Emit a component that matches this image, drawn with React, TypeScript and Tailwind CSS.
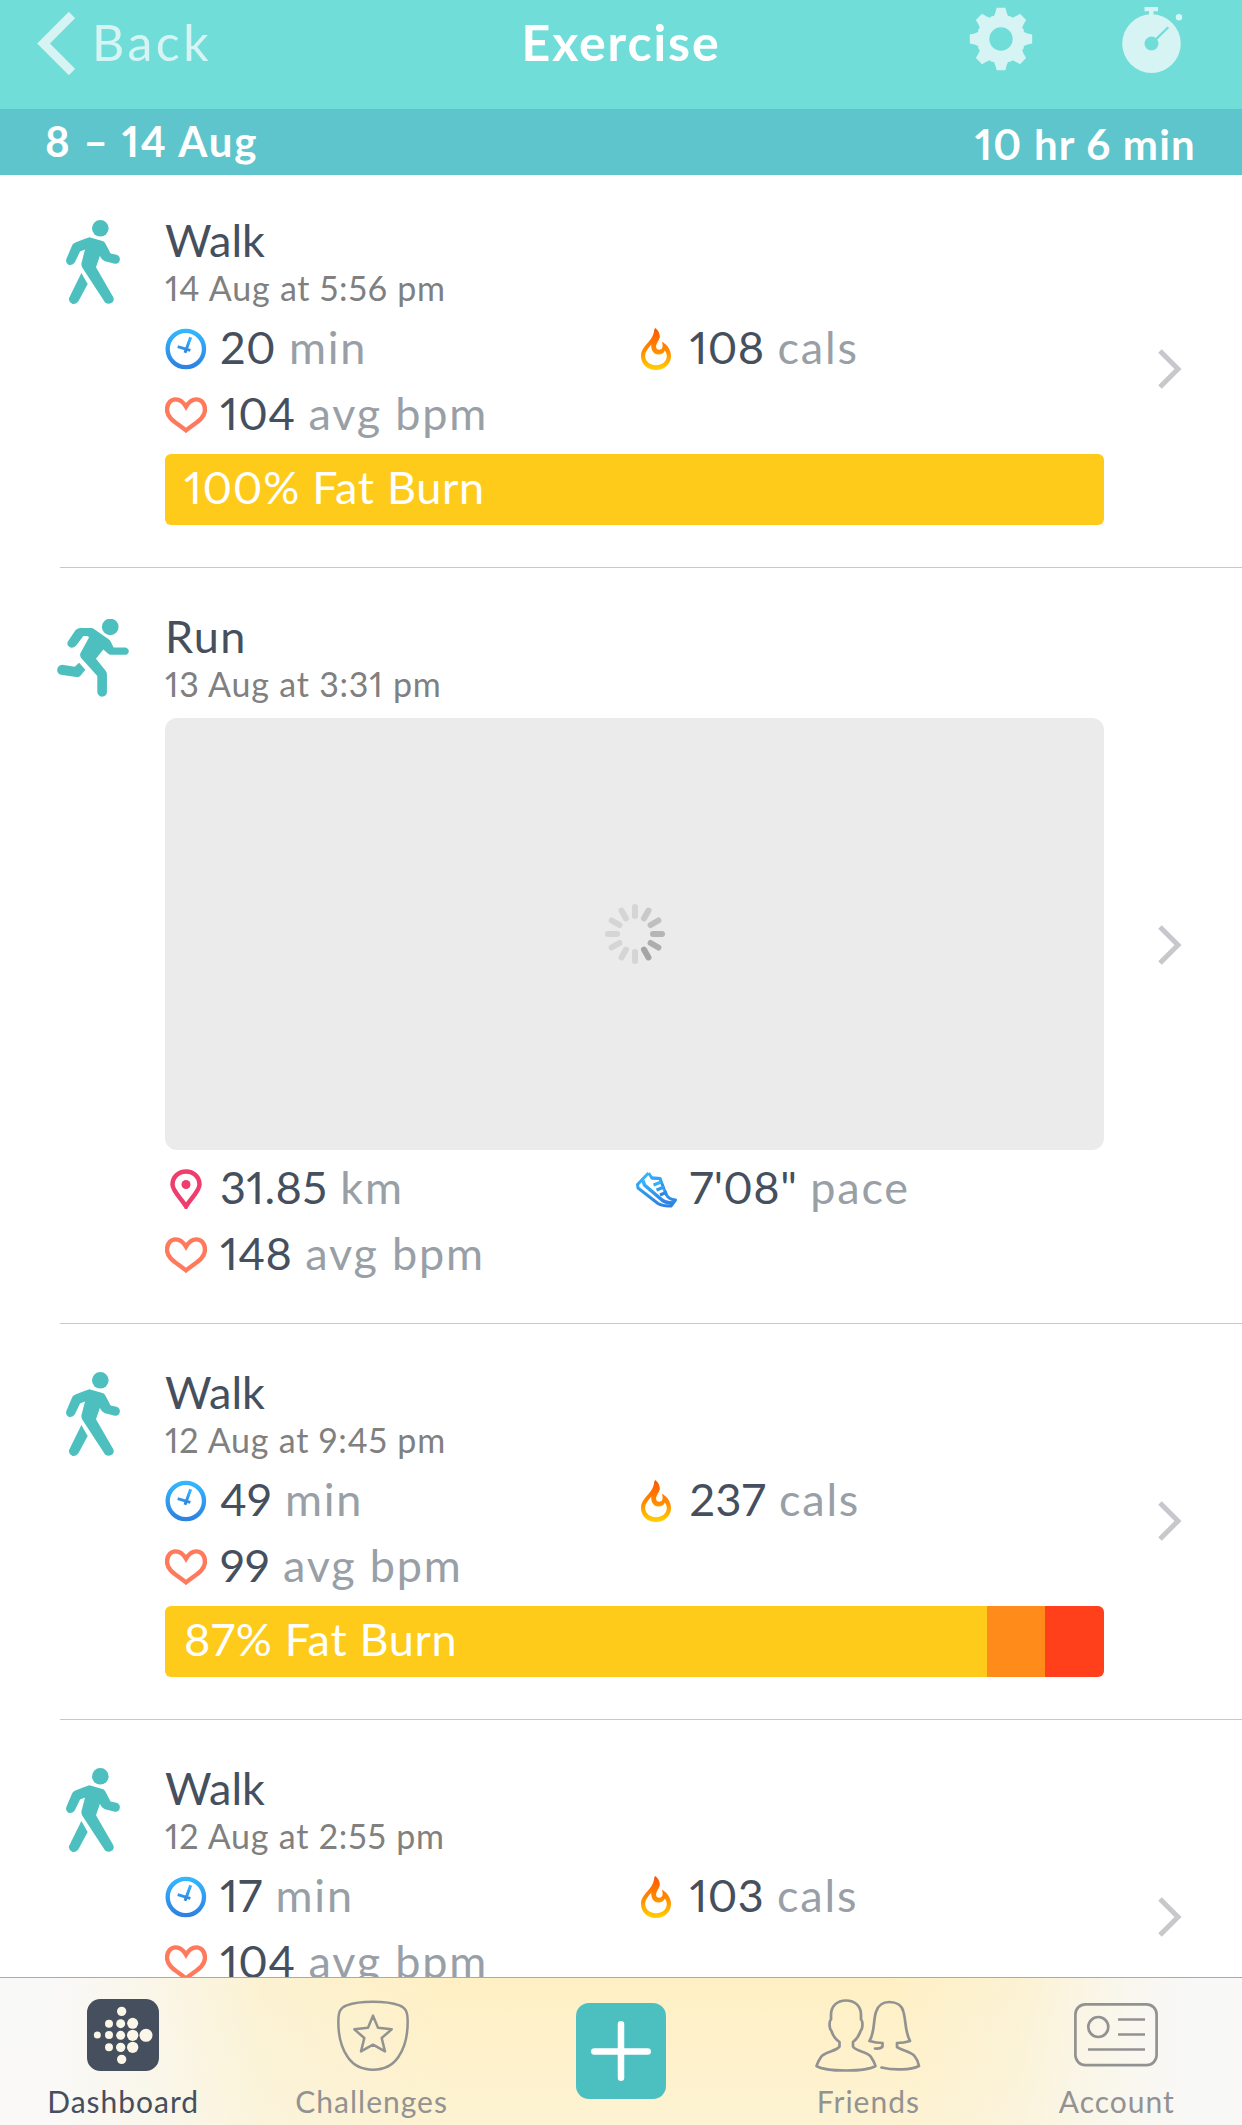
import type { ReactNode } from "react";
import clsx from "clsx";

type StatKind = "time" | "cals" | "heart" | "distance" | "pace";

type Stat = {
  kind: StatKind;
  value: string;
  unit: string;
};

type Zone = { color: string; width: number };

type Exercise = {
  id: number;
  type: "Walk" | "Run";
  date: string;
  stats: Stat[];
  hasMap?: boolean;
  zoneLabel?: string;
  zones?: Zone[];
};

const exercises: Exercise[] = [
  {
    id: 1,
    type: "Walk",
    date: "14 Aug at 5:56 pm",
    stats: [
      { kind: "time", value: "20", unit: "min" },
      { kind: "cals", value: "108", unit: "cals" },
      { kind: "heart", value: "104", unit: "avg bpm" },
    ],
    zoneLabel: "100% Fat Burn",
    zones: [{ color: "#ffcb1a", width: 100 }],
  },
  {
    id: 2,
    type: "Run",
    date: "13 Aug at 3:31 pm",
    hasMap: true,
    stats: [
      { kind: "distance", value: "31.85", unit: "km" },
      { kind: "pace", value: "7'08\"", unit: "pace" },
      { kind: "heart", value: "148", unit: "avg bpm" },
    ],
  },
  {
    id: 3,
    type: "Walk",
    date: "12 Aug at 9:45 pm",
    stats: [
      { kind: "time", value: "49", unit: "min" },
      { kind: "cals", value: "237", unit: "cals" },
      { kind: "heart", value: "99", unit: "avg bpm" },
    ],
    zoneLabel: "87% Fat Burn",
    zones: [
      { color: "#ffcb1a", width: 87.54 },
      { color: "#ff8c1a", width: 6.18 },
      { color: "#ff401a", width: 6.28 },
    ],
  },
  {
    id: 4,
    type: "Walk",
    date: "12 Aug at 2:55 pm",
    stats: [
      { kind: "time", value: "17", unit: "min" },
      { kind: "cals", value: "103", unit: "cals" },
      { kind: "heart", value: "104", unit: "avg bpm" },
    ],
    zoneLabel: "100% Fat Burn",
    zones: [{ color: "#ffcb1a", width: 100 }],
  },
];

export default function App() {
  return (
    <div className="flex h-[2125px] w-[1242px] flex-col overflow-hidden bg-white font-['Lato','Open_Sans',sans-serif] proportional-nums text-[#454f5e]">
      <Header />
      <div className="z-10 flex h-[66px] shrink-0 justify-between bg-[#5ec5cc] pl-[45px] pr-[46px] text-[42px] font-bold leading-[66px] text-white">
        <span className="-mt-px tracking-[1.8px]">8 – 14 Aug</span>
        <span className="mt-[2px] tracking-[1.2px]">10 hr 6 min</span>
      </div>
      <main className="-mt-[3px] min-h-0 flex-1 overflow-hidden">
        {exercises.map((e) => (
          <ExerciseRow key={e.id} e={e} />
        ))}
      </main>
      <TabBar />
    </div>
  );
}

function Header() {
  return (
    <header className="grid h-[109px] shrink-0 grid-cols-3 bg-[#71ddd8] text-[50px] leading-[60px]">
      <div className="flex pl-[37px] pt-[12px] text-[#d6f4f3]">
        <svg width="38" height="63" viewBox="0 0 38 63" fill="none" stroke="currentColor" strokeWidth="9">
          <path d="M35 3 6.5 31.5 35 60" />
        </svg>
        <span className="ml-[17px] tracking-[3.5px]">Back</span>
      </div>
      <h1 className="pt-[12px] text-center font-bold tracking-[1.9px] text-white">Exercise</h1>
      <div className="flex justify-end gap-[89px] pr-[58px] pt-[7px] text-[#d6f4f3]">
        <GearIcon />
        <StopwatchIcon />
      </div>
    </header>
  );
}

function ExerciseRow({ e }: { e: Exercise }) {
  return (
    <section className="ml-[60px] flex border-b border-[#c8c7cc]">
      <div className="-ml-[3px] flex w-[72px] shrink-0 justify-center pt-[48px]">
        {e.type === "Walk" ? <WalkIcon /> : <RunIcon />}
      </div>
      <div
        className={clsx(
          "ml-[36px] w-[939px] shrink-0 pt-[43px]",
          e.zones ? "pb-[42px]" : "pb-[37px]",
        )}
      >
        <h2 className={clsx("text-[45px] leading-[50px]", e.type === "Run" && "tracking-[1.5px]")}>{e.type}</h2>
        <p className="mt-px text-[34px] leading-[44px] tracking-[0.8px] text-[#808080]">{e.date}</p>
        {e.hasMap && (
          <div className="mb-[4px] mt-[12px] flex h-[432px] items-center justify-center rounded-xl bg-[#ebebeb]">
            <Spinner />
          </div>
        )}
        <div className={clsx("grid grid-cols-2", !e.hasMap && "mt-[4px]")}>
          {e.stats.map((s) => (
            <div key={s.kind} className="flex h-[66px] text-[45px] leading-[67px]">
              <span className="mt-1 flex w-[42px] items-center justify-center">
                <StatIcon kind={s.kind} />
              </span>
              <span className="ml-[13px] tracking-[0.4px]">{s.value}</span>
              <span className="ml-[13px] tracking-[1.8px] text-[#999fa6]">{s.unit}</span>
            </div>
          ))}
        </div>
        {e.zones && (
          <div className="relative mt-[8px] flex h-[71px] overflow-hidden rounded-md">
            {e.zones.map((z) => (
              <div key={z.color} style={{ width: `${z.width}%`, background: z.color }} />
            ))}
            <span className="absolute left-[19px] top-0 text-[45px] leading-[67px] tracking-[0.7px] text-white">
              {e.zoneLabel}
            </span>
          </div>
        )}
      </div>
      <div className="mb-[2px] ml-[54px] flex items-center">
        <svg width="24" height="40" viewBox="0 0 24 40" fill="none" stroke="#c7c7cc" strokeWidth="5">
          <path d="M2 2 20 20 2 38" />
        </svg>
      </div>
    </section>
  );
}

function StatIcon({ kind }: { kind: StatKind }) {
  switch (kind) {
    case "time":
      return (
        <svg width="42" height="42" viewBox="0 0 126 126" fill="none" stroke="url(#blue)">
          <BlueGradient />
          <circle cx="62.5" cy="63" r="54.5" strokeWidth="13" />
          <path d="M60 74 77 28M38 56 76 67" strokeWidth="9" />
        </svg>
      );
    case "cals":
      return (
        <svg width="30" height="42" viewBox="0 0 30 42">
          <defs>
            <linearGradient id="flame" x1="0" y1="0" x2="0" y2="1">
              <stop offset="0" stopColor="#ff5500" />
              <stop offset="0.55" stopColor="#ff8c00" />
              <stop offset="1" stopColor="#ffd200" />
            </linearGradient>
          </defs>
          <path
            fill="url(#flame)"
            fillRule="evenodd"
            d="M14.3 0C17 2 18.8 5 18.8 8.500C18.800 12 15.100 15 15.100 18.500C15.100 20.700 16.500 21.800 18.400 21.700C22 21.500 22.200 17.500 20.900 13.700C24.500 15.500 30 20.500 30 28C30 36 23.500 42 15 42C6.500 42 0 36 0 28C0 17.500 13 13 13.200 1.500ZM10.300 16.500C8 20 4.200 23 4.200 28C4.200 33.500 9 37.300 15 37.300C21 37.300 25.800 33.500 25.800 28C25.800 26 25 24 23.800 22.500C23 25 20.500 26.400 17.500 26.400C12.500 26.400 9.800 22 10.300 16.500Z"
          />
        </svg>
      );
    case "heart":
      return (
        <svg width="42" height="36" viewBox="375 590 126 108" fill="none" stroke="#ff7a5c" strokeWidth="13">
          <path d="M438 619Q425 597 407 597C392 597 381 610 381 628C381 655 410 667 438 690C466 667 495 655 495 628C495 610 484 597 469 597Q451 597 438 619Z" />
        </svg>
      );
    case "distance":
      return (
        <svg width="32" height="40" viewBox="0 0 32 40">
          <path
            d="M16 37.500C12 30.500 2.500 22 2.500 15.500C2.500 8 8.500 2.500 16 2.500S29.500 8 29.500 15.500C29.500 22 20 30.500 16 37.500Z"
            fill="none"
            stroke="#ef3e6d"
            strokeWidth="4.500"
          />
          <circle cx="16" cy="15.500" r="4.500" fill="#ef3e6d" />
        </svg>
      );
    case "pace":
      return (
        <svg width="42" height="37" viewBox="0 0 42 37" fill="none" stroke="url(#blue)" strokeWidth="3">
          <BlueGradient />
          <path d="M13.500 2 2.500 13.500 3 17 23 32.500Q28 35.500 36 35L40.500 29Q34 28.500 31.500 24L29 18M25 7.500 17 7Z" strokeLinejoin="round" />
          <path d="M13.500 2 17 7 25 7.500 29 18" strokeLinejoin="round" />
          <path d="M8 9.500 9.500 14 27 29Q31 32 38 32" strokeWidth="3.500" />
          <path d="M18.500 14 26 11M21.500 19 29 16M25 24 32 21" />
        </svg>
      );
  }
}

function BlueGradient() {
  return (
    <defs>
      <linearGradient id="blue" x1="0" y1="0" x2="0" y2="1">
        <stop offset="0" stopColor="#33b7ff" />
        <stop offset="1" stopColor="#2e82e2" />
      </linearGradient>
    </defs>
  );
}

function WalkIcon() {
  return (
    <svg width="54" height="84" viewBox="48 29 162 253" fill="#4dbfbf">
      <circle cx="151" cy="54" r="25" />
      <path d="M72 99Q80 94 118 81L160 93Q165 96 167 101L182 130 200 134Q210 138 210 148 208 162 195 161L165 153Q155 150 150 137L138 171 188 258Q195 268 188 277 178 285 166 278 163 275 161 271L97 173Q94 168 94 160L105 118 90 124 74 157Q66 167 55 164 45 159 49 146L66 106Q68 101 72 99Z" />
      <path d="M94 189 113 222 85 274Q78 284 66 281 53 275 58 262Z" />
    </svg>
  );
}

function RunIcon() {
  return (
    <svg width="72" height="78" viewBox="51 57 216 235" fill="#4dbfbf" className="mt-[3px]">
      <circle cx="211" cy="81" r="25" />
      <path d="M120 84H153Q158 84 162 87L206 118Q211 121 213 126L221 143H256Q267 146 267 154 266 163 257 165H213Q208 165 204 161L190 149 168 177 197 213Q201 218 201 224V278Q199 291 186 291 174 290 172 278V229L122 173Q118 167 121 160L147 113Q146 108 140 108H130L107 138Q100 145 91 143 80 138 82 127L106 91Q111 85 120 84Z" />
      <path d="M117 189 136 210 122 227Q117 233 109 232L62 225Q51 222 51 209 54 196 66 195L104 201Z" />
    </svg>
  );
}

const spokes = [
  "#d5d5d5", "#c9c9c9", "#bfbfbf", "#b5b5b5", "#adadad", "#a5a5a5",
  "#d5d5d5", "#d5d5d5", "#d5d5d5", "#d5d5d5", "#d5d5d5", "#d5d5d5",
];

function Spinner() {
  return (
    <svg width="60" height="60" viewBox="-30 -30 60 60" strokeWidth="6" strokeLinecap="round">
      {spokes.map((c, i) => (
        <path key={i} d="M0 -18V-27" stroke={c} transform={`rotate(${i * 30})`} />
      ))}
    </svg>
  );
}

// Outline of one gear tooth as [angle in degrees, radius], repeated eight times
const tooth = [[-22.5, 24.500], [-17, 24], [-12, 27], [-8, 31.500], [8, 31.500], [12, 27], [17, 24]];
const gearPoints = Array.from({ length: 8 })
  .flatMap((_, i) =>
    tooth.map(([a, r]) => {
      const t = ((a + i * 45) * Math.PI) / 180;
      return `${(r * Math.sin(t)).toFixed(2)} ${(-r * Math.cos(t)).toFixed(2)}`;
    }),
  )
  .join("L");

function GearIcon() {
  return (
    <svg width="64" height="64" viewBox="-32 -32 64 64" fill="currentColor" fillRule="evenodd">
      <path d={`M${gearPoints}ZM-11.700 0A11.700 11.700 0 1 0 11.700 0A11.700 11.700 0 1 0 -11.700 0Z`} />
    </svg>
  );
}

function StopwatchIcon() {
  return (
    <svg width="62" height="66" viewBox="0 0 62 66" fill="currentColor">
      <path d="M22.500 0H36V4.300H31.500V9H27V4.300H22.500Z" />
      <circle cx="29.500" cy="36.600" r="29.300" />
      <circle cx="57" cy="10.300" r="3.200" />
      <g className="text-[#71ddd8]">
        <circle cx="29.500" cy="36.600" r="7" />
        <path d="M29.500 36.600 46.300 20.300" stroke="currentColor" strokeWidth="2.200" />
      </g>
    </svg>
  );
}

function TabBar() {
  return (
    <nav className="z-10 grid h-[148px] shrink-0 grid-cols-5 border-t border-[#a9a9a9] bg-[linear-gradient(to_bottom,transparent,#f9f8f24d),linear-gradient(to_right,#f9f9f9_4%,#faf6e9_12%,#fcf2d2_21%,#fff0c4_36%,#fff0c4_72%,#fcf2d3_82%,#f9f7ef_91%,#f8f8f8_96%)] text-[30px] leading-[36px] text-[#929292]">
      <Tab label="Dashboard" active>
        <DashboardIcon />
      </Tab>
      <Tab label="Challenges">
        <ShieldIcon />
      </Tab>
      <div className="flex justify-center pt-[25px]">
        <div className="flex h-[96px] w-[90px] items-center justify-center rounded-[13px] bg-[#4cc0c1]">
          <svg width="60" height="60" viewBox="0 0 60 60" stroke="white" strokeWidth="6.500" strokeLinecap="round">
            <path d="M30 3.300V56.700M3.300 30.500H56.700" />
          </svg>
        </div>
      </div>
      <Tab label="Friends">
        <FriendsIcon />
      </Tab>
      <Tab label="Account">
        <CardIcon />
      </Tab>
    </nav>
  );
}

function Tab({ label, active, children }: { label: string; active?: boolean; children: ReactNode }) {
  return (
    <div className={clsx("flex flex-col items-center pr-[2px]", active && "text-[#454f5e]")}>
      <div className="flex h-[105px] items-start pt-[21px]">{children}</div>
      <span className="tracking-[1px]">{label}</span>
    </div>
  );
}

// x, y and radius of each dot
const dots = [
  [104, 37, 14],
  [66, 74, 12], [101, 74, 13.500], [137, 73, 16.500],
  [31, 108, 10.500], [66, 108, 12], [101, 109, 13.500], [137, 109, 17], [177, 109, 19.500],
  [66, 145, 12], [101, 145, 14], [137, 145, 17],
  [104, 181, 14],
];

function DashboardIcon() {
  return (
    <svg width="72" height="72" viewBox="0 0 216 216">
      <rect width="216" height="216" rx="40" fill="#454f5e" />
      {dots.map(([x, y, r], i) => (
        <circle key={i} cx={x} cy={y} r={r} fill="#fbf7e8" />
      ))}
    </svg>
  );
}

function ShieldIcon() {
  return (
    <svg width="74" height="74" viewBox="1008 296 222 222" fill="none" stroke="currentColor" strokeWidth="7.500" className="ml-[2px]">
      <path d="M1119 304.500C1090 304.500 1060 308 1040 315 1020 322 1015 335 1015 365 1015 410 1022 440 1043 470 1062 498 1090 508 1119 508 1148 508 1176 498 1195 470 1216 440 1223 410 1223 365 1223 335 1218 322 1198 315 1178 308 1148 304.500 1119 304.500Z" />
      <path
        strokeLinejoin="round"
        d="M1119 346 1134 382 1175 387 1145 413 1155 453 1119 433 1083 453 1093 413 1063 387 1104 382Z"
      />
    </svg>
  );
}

function FriendsIcon() {
  return (
    <svg
      width="114"
      height="78"
      viewBox="0 -4 114 78"
      fill="none"
      stroke="currentColor"
      strokeWidth="2.700"
      strokeLinejoin="round"
      strokeLinecap="round"
      className="-mt-[4px] mr-[2px]"
    >
      <path d="M36 1.500C27 1.500 21 7 21 16V20.500C19 22 19 30 21.500 32C23 37 25 40 29.500 43V47.500C27 52 14 53 11 58C9 61 7 65 6.500 67C12 70.500 24 71.500 36 71.500S60 70.500 65.500 67C65 65 63 61 61 58C58 53 45 52 43 47.500V43C47 40 49 37 50.500 32C53 30 53 22 51 20.500V16C51 7 45 1.500 36 1.500Z" />
      <path d="M65 49.500Q71 50 72.500 47.500V44Q66 44 59.500 42C65 33 63 22 66 13C68 6 73 3 79.500 3S92 6 93.500 13C96 22 95 33 100 42Q94 44 87 44V48C90 51 101 52 104.500 57C107 60 108.500 64 109 67C101 71 84 71.500 71.500 68.500" />
    </svg>
  );
}

function CardIcon() {
  return (
    <svg width="84" height="64" viewBox="0 0 84 64" fill="none" stroke="currentColor" strokeWidth="2.700" className="mr-[2px] mt-[4px]">
      <rect x="1.400" y="1.400" width="81.200" height="60.700" rx="10" />
      <circle cx="24.300" cy="24" r="10" />
      <path d="M44 16.500H71M44 31.500H71M14 46.500H71" />
    </svg>
  );
}
